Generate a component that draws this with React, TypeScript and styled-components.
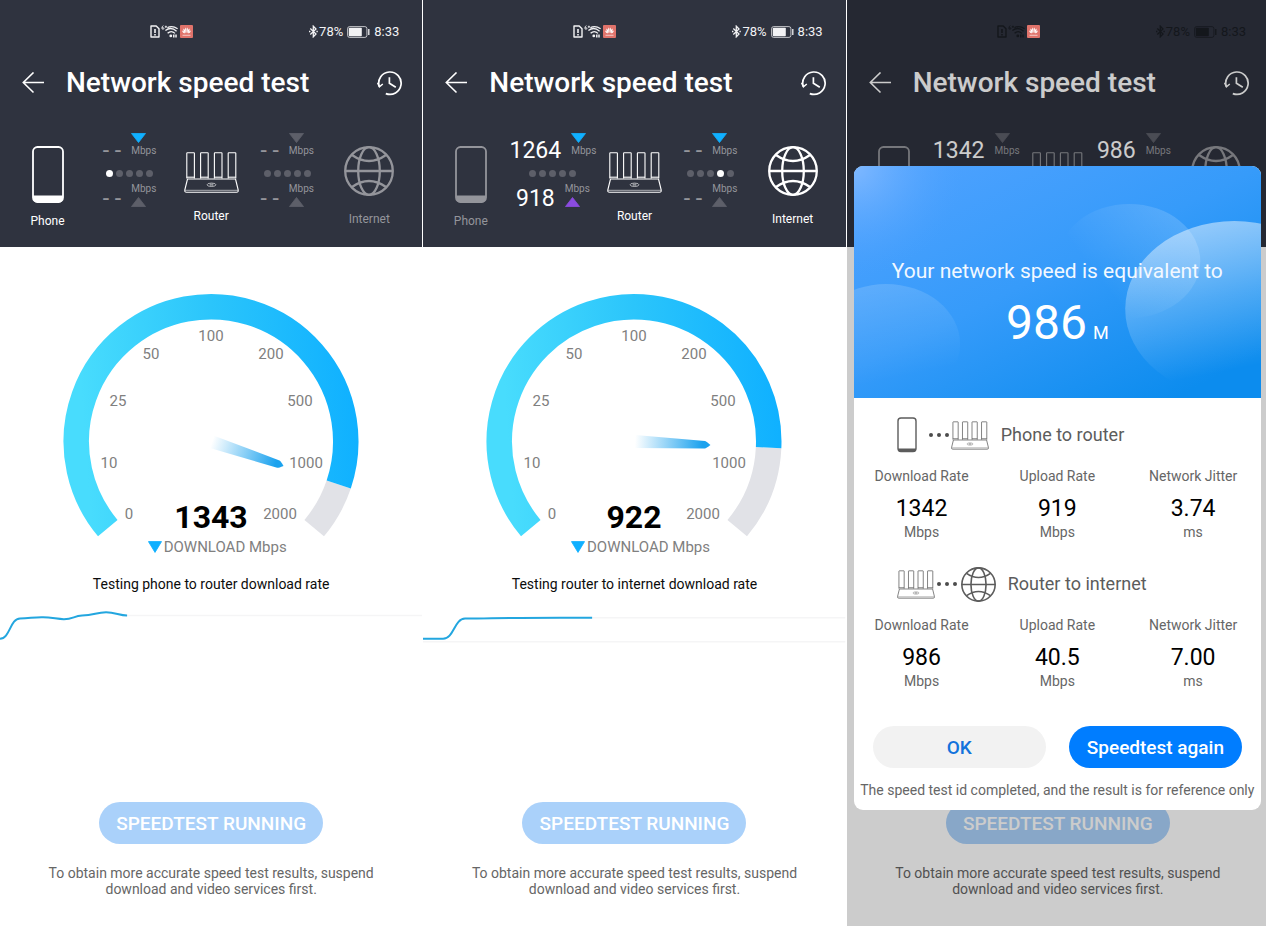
import React from "react";
import styled, { createGlobalStyle } from "styled-components";

const GlobalStyle = createGlobalStyle`
  *, *::before, *::after { box-sizing: border-box; }
  body {
    margin: 0;
    background: #fff;
    font-family: Roboto, "Liberation Sans", sans-serif;
    overflow-x: hidden;
  }
  h1, h2, p { margin: 0; font-weight: 400; }
  button { font-family: inherit; border: 0; cursor: pointer; }
  svg { display: block; flex: none; }
`;

/* ---------- page ---------- */

const Screens = styled.main`
  display: grid;
  grid-template-columns: repeat(3, minmax(0, 1fr));
  gap: 1px;
  width: calc(100% + 3px);
  min-height: 100vh;
`;

const Screen = styled.section`
  position: relative;
  display: flex;
  flex-direction: column;
  background: #fff;
  overflow: hidden;
`;

const Header = styled.header`
  padding-top: 17px;
  background: #2f333f;
  color: #fff;
`;

const StatusBar = styled.div<{ $dark?: boolean }>`
  position: relative;
  z-index: 2;
  display: flex;
  align-items: center;
  justify-content: space-between;
  height: 29px;
  padding: 0 23px 0 150px;
  font-size: 13px;
  color: ${(p) => (p.$dark ? "#14171c" : "#f2f2f4")};
`;

const StatusGroup = styled.div<{ $gap: number }>`
  display: flex;
  align-items: center;
  gap: ${(p) => p.$gap}px;
`;

const TitleRow = styled.div`
  display: flex;
  align-items: center;
  height: 74px;
  padding: 0 20px 0 22px;
`;

const Title = styled.h1`
  flex: 1;
  margin-left: 21px;
  font-size: 28px;
  line-height: 34px;
  font-weight: 500;
  white-space: nowrap;
`;

const IconButton = styled.button`
  display: flex;
  padding: 0;
  background: none;
  color: #fff;
`;

const Devices = styled.div`
  display: grid;
  grid-template-columns:
    minmax(0, 95fr) minmax(0, 69fr) minmax(0, 94fr) minmax(0, 58fr)
    minmax(0, 106fr);
  align-items: start;
  height: 127px;
  padding-top: 13px;
`;

const Device = styled.div<{ $active: boolean; $top: number; $gap: number }>`
  display: flex;
  flex-direction: column;
  align-items: center;
  gap: ${(p) => p.$gap}px;
  padding-top: ${(p) => p.$top}px;
  font-size: 12px;
  line-height: 14px;
  color: ${(p) => (p.$active ? "#fff" : "#94959b")};
`;

const Link = styled.div`
  display: flex;
  flex-direction: column;
  align-items: center;
`;

const Rate = styled.div`
  display: flex;
  align-items: flex-end;
  gap: 10px;
`;

const RateValue = styled.span<{ $empty: boolean }>`
  font-size: 23px;
  line-height: 16px;
  white-space: nowrap;
  color: ${(p) => (p.$empty ? "#94959b" : "#fff")};
`;

const RateUnit = styled.span`
  display: flex;
  flex-direction: column;
  font-size: 10px;
  line-height: 16px;
  color: #94959b;
`;

const Dots = styled.div`
  display: flex;
  gap: 3px;
  margin: 11px 0 4px;
`;

const Dot = styled.i<{ $on: boolean }>`
  width: 7px;
  height: 7px;
  border-radius: 50%;
  background: ${(p) => (p.$on ? "#fff" : "#5d5f69")};
`;

/* ---------- test body ---------- */

const Body = styled.div`
  display: flex;
  flex-direction: column;
  align-items: center;
  padding-top: 44px;
`;

const GaugeSvg = styled.svg`
  width: 300px;
  height: 248px;
`;

const Tick = styled.text`
  font-size: 15px;
  fill: #808080;
  text-anchor: middle;
`;

const Speed = styled.text`
  font-size: 32px;
  font-weight: 700;
  fill: #000;
  text-anchor: middle;
`;

const Direction = styled.p`
  display: flex;
  align-items: center;
  gap: 2px;
  padding-left: 12px;
  font-size: 15px;
  line-height: 16px;
  color: #808080;
`;

const Stage = styled.p`
  margin-top: 20px;
  font-size: 14px;
  line-height: 18px;
  color: #0c0c0c;
`;

const Trace = styled.svg`
  width: 100%;
  height: 48px;
  margin-top: 8px;
`;

const Footer = styled.footer`
  display: flex;
  flex-direction: column;
  align-items: center;
  gap: 21px;
  margin-top: auto;
  padding: 0 40px 29px;
`;

const RunButton = styled.button`
  height: 42px;
  width: 224px;
  padding: 0;
  border-radius: 21px;
  background: #aad1fa;
  color: #fff;
  font-size: 19px;
  font-weight: 500;
  white-space: nowrap;
`;

const Hint = styled.p`
  max-width: 340px;
  font-size: 14px;
  line-height: 16px;
  text-align: center;
  color: #666;
`;

/* ---------- result dialog ---------- */

const Shade = styled.div`
  position: absolute;
  inset: 0;
  z-index: 1;
  background: rgba(0, 0, 0, 0.2);
`;

const Dialog = styled.div`
  position: absolute;
  z-index: 3;
  top: 166px;
  left: 7px;
  right: 8px;
  overflow: hidden;
  border-radius: 9px;
  background: #fff;
`;

const Hero = styled.div`
  position: relative;
  display: flex;
  flex-direction: column;
  align-items: center;
  height: 232px;
  padding-top: 92px;
  color: #fff;
`;

const HeroArt = styled.svg`
  position: absolute;
  inset: 0;
  width: 100%;
  height: 100%;
`;

const HeroText = styled.h2`
  position: relative;
  font-size: 21px;
  line-height: 26px;
  white-space: nowrap;
  color: #f2f8ff;
`;

const HeroSpeed = styled.p`
  position: relative;
  display: flex;
  align-items: baseline;
  gap: 6px;
  margin-top: 10px;
  font-size: 48px;
  line-height: 58px;
`;

const HeroUnit = styled.span`
  font-size: 18px;
`;

const Result = styled.section`
  height: 149px;
`;

const ResultHead = styled.div`
  display: flex;
  align-items: center;
  height: 66px;
  padding: 8px 0 0 43px;
  color: #5c5c5c;
`;

const ResultTitle = styled.h2`
  margin-left: 12px;
  font-size: 18px;
  line-height: 22px;
  color: #5c5c5c;
`;

const SmallDots = styled.span<{ $before: number; $after: number }>`
  display: flex;
  gap: 4px;
  margin: 0 ${(p) => p.$after}px 0 ${(p) => p.$before}px;

  i {
    width: 4px;
    height: 4px;
    border-radius: 50%;
    background: #4c4c4c;
  }
`;

const Stats = styled.table`
  width: 100%;
  table-layout: fixed;
  border-collapse: collapse;
  text-align: center;

  th, td {
    padding: 0;
  }

  th {
    font-size: 14px;
    line-height: 24px;
    font-weight: 400;
    color: #666;
  }
`;

const StatValue = styled.span`
  display: block;
  padding-top: 7px;
  font-size: 23px;
  line-height: 28px;
  color: #000;
`;

const StatUnit = styled.span`
  display: block;
  font-size: 14px;
  line-height: 18px;
  color: #666;
`;

const Actions = styled.div`
  display: grid;
  grid-template-columns: 1fr 1fr;
  gap: 23px;
  padding: 30px 19px 0;
`;

const Action = styled.button<{ $primary?: boolean }>`
  height: 42px;
  padding: 0;
  border-radius: 21px;
  font-size: 19px;
  font-weight: 500;
  white-space: nowrap;
  background: ${(p) => (p.$primary ? "#007dff" : "#f2f2f2")};
  color: ${(p) => (p.$primary ? "#fff" : "#1273dc")};
`;

const Note = styled.p`
  padding: 12px 0 10px;
  font-size: 14px;
  line-height: 20px;
  text-align: center;
  white-space: nowrap;
  color: #666;
`;

/* ---------- drawings ---------- */

const Triangle = ({ color, up, size = 15 }: { color: string; up?: boolean; size?: number }) => (
  <svg width={size} height={size === 15 ? 10 : 12} viewBox="0 0 15 10" preserveAspectRatio="none">
    <path d={up ? "M7.5 0.5 L14.5 9.5 H0.5 Z" : "M0.5 0.5 H14.5 L7.5 9.5 Z"} fill={color} stroke={color} strokeWidth="0.8" strokeLinejoin="round" />
  </svg>
);

const PhoneIcon = ({ small }: { small?: boolean }) =>
  small ? (
    <svg width="20" height="36" viewBox="0 0 20 36" fill="none">
      <rect x="1" y="1" width="18" height="33.5" rx="3" stroke="currentColor" strokeWidth="1.4" />
      <path d="M1 31.5 H19 C19 34 18 35 16 35 H4 C2 35 1 34 1 31.5 Z" fill="currentColor" />
    </svg>
  ) : (
    <svg width="32" height="57" viewBox="0 0 32 57" fill="none">
      <rect x="1" y="1" width="30" height="55" rx="4.5" stroke="currentColor" strokeWidth="1.8" />
      <path d="M1 49.5 H31 V52 C31 55 29 56.5 26.5 56.5 H5.5 C3 56.5 1 55 1 52 Z" fill="currentColor" />
    </svg>
  );

const RouterIcon = ({ width = 55, height = 41 }: { width?: number; height?: number }) => (
  <svg width={width} height={height} viewBox="0 0 55 41" fill="none" stroke="currentColor" strokeWidth="1.1" strokeLinejoin="round">
    {[2.8, 16.6, 30.4, 44.2].map((x) => (
      <g key={x}>
        <path d={`M${x} 26.5 V1.2 Q${x} 0.7 ${x + 0.6} 0.7 H${x + 7} Q${x + 7.6} 0.7 ${x + 7.6} 1.2 V26.5`} />
        <path d={`M${x} 25.2 H${x + 7.6}`} />
      </g>
    ))}
    <path d="M3.5 27 H51.5 L54.2 38 Q54.5 40.3 52.5 40.3 H2.5 Q0.5 40.3 0.8 38 Z" />
    <path d="M1 38.3 H54" strokeWidth="0.6" />
    <ellipse cx="27.5" cy="32.8" rx="4.4" ry="1.7" strokeWidth="0.6" />
    <path d="M25.5 32.8 H29.5 M26.8 31.5 V34 M28.2 31.5 V34" strokeWidth="0.4" />
  </svg>
);

const GlobeIcon = ({ size = 50 }: { size?: number }) => (
  <svg width={size} height={size} viewBox="0 0 50 50" fill="none" stroke="currentColor" strokeWidth="2.3">
    <circle cx="25" cy="25" r="23.8" />
    <ellipse cx="25" cy="25" rx="10.8" ry="23.8" />
    <path d="M1 25 H49 M8 9 Q25 21 42 9 M8 41 Q25 29 42 41" />
  </svg>
);

const BackIcon = () => (
  <svg width="23" height="22" viewBox="0 0 23 22" fill="none" stroke="currentColor" strokeWidth="1.6">
    <path d="M11.5 0.5 L1.3 10.5 L11.5 20.5 M1.3 10.5 H22" />
  </svg>
);

const HistoryIcon = () => (
  <svg width="25" height="25" viewBox="0 0 25 25" fill="none" stroke="currentColor" strokeWidth="1.7">
    <path d="M2.2 15.4 A11.2 11.2 0 1 1 8.8 22.6" />
    <path d="M12.4 6.2 V12.3 L18.8 16.2" />
    <path d="M0.6 11.8 L2.4 15.8 L5.8 13" strokeWidth="1.5" />
  </svg>
);

const SimIcon = () => (
  <svg width="10" height="13" viewBox="0 0 10 13" fill="none" stroke="currentColor" strokeWidth="1.4">
    <path d="M1 1 H6.2 L9 3.8 V12 H1 Z" strokeLinejoin="round" />
    <path d="M5 4 V8 M5 9 V10.4" strokeWidth="1.6" />
  </svg>
);

const WifiIcon = () => (
  <svg width="17" height="13" viewBox="0 0 17 13" fill="none" stroke="currentColor">
    <path d="M2.4 0.6 Q0.8 1.4 0.9 3.1 Q1 4.4 2 4.3 Q3 4.2 2.9 3.2 Q2.8 2.4 1.2 2.8 M3.8 1.8 H6 M4.9 0.7 V2.9" strokeWidth="0.9" />
    <path d="M6.4 2.6 Q11.5 0.2 16.6 3.8 M4.4 5.6 Q10 1.2 15.6 6.2 M6.6 8.3 Q10.2 4.8 14 8.4" strokeWidth="1.3" />
    <circle cx="9.8" cy="10.9" r="1.4" fill="currentColor" stroke="none" />
    <path d="M12.8 9.6 V12.4 M15 9.6 V12.4" strokeWidth="1.5" />
  </svg>
);

const BrandIcon = () => (
  <svg width="13" height="13" viewBox="0 0 13 13">
    <rect width="13" height="13" rx="1" fill="#e0736b" />
    <g fill="#fff">
      <path d="M6.2 8 C4.8 6 4.8 3.5 5.8 2.6 C6.4 3.5 6.5 6 6.2 8 Z" />
      <path d="M6.8 8 C8.2 6 8.2 3.5 7.2 2.6 C6.6 3.5 6.5 6 6.8 8 Z" />
      <path d="M5.8 8 C3.5 6.8 3 5 3.6 3.6 C4.8 4.6 5.5 6 5.8 8 Z" />
      <path d="M7.2 8 C9.5 6.8 10 5 9.4 3.6 C8.2 4.6 7.5 6 7.2 8 Z" />
      <path d="M5.2 8.2 C3 8.4 2.2 7 2.3 5.6 C3.6 6 4.6 7 5.2 8.2 Z" />
      <path d="M7.8 8.2 C10 8.4 10.8 7 10.7 5.6 C9.4 6 8.4 7 7.8 8.2 Z" />
      <rect x="2.5" y="9.8" width="8" height="0.9" opacity="0.7" />
    </g>
  </svg>
);

const BluetoothIcon = () => (
  <svg width="9" height="13" viewBox="0 0 9 13" fill="none" stroke="currentColor" strokeWidth="1.3">
    <path d="M1.3 3.5 L7 9 L4.3 11.8 V1.2 L7 4 L1.3 9.5" />
    <path d="M0 6.5 H1.4 M7.4 6.5 H8.8" />
  </svg>
);

const BatteryIcon = () => (
  <svg width="23" height="12" viewBox="0 0 23 12" fill="none">
    <rect x="0.6" y="0.6" width="19.3" height="10.8" rx="2" stroke="currentColor" strokeWidth="1" opacity="0.75" />
    <rect x="1.8" y="1.8" width="13" height="8.4" rx="0.8" fill="currentColor" />
    <path d="M21.8 3 V9" stroke="currentColor" strokeWidth="1.3" />
  </svg>
);

/* ---------- parts ---------- */

const GREY = "#5d5f69";
const BLUE = "#10b0ff";
const PURPLE = "#8b4be0";

type LinkData = {
  down?: string;
  up?: string;
  active?: number;
  downColor?: string;
  upColor?: string;
};

function LinkRates({ down, up, active = -1, downColor = GREY, upColor = GREY }: LinkData) {
  return (
    <Link>
      <Rate>
        <RateValue $empty={!down}>{down ?? "- -"}</RateValue>
        <RateUnit>
          <Triangle color={downColor} />
          Mbps
        </RateUnit>
      </Rate>
      <Dots>
        {[0, 1, 2, 3, 4].map((i) => (
          <Dot key={i} $on={i === active} />
        ))}
      </Dots>
      <Rate>
        <RateValue $empty={!up}>{up ?? "- -"}</RateValue>
        <RateUnit>
          Mbps
          <Triangle color={upColor} up />
        </RateUnit>
      </Rate>
    </Link>
  );
}

type HeaderProps = {
  darkStatus?: boolean;
  phone: boolean;
  router: boolean;
  internet: boolean;
  local: LinkData;
  wan: LinkData;
};

function ScreenHeader({ darkStatus, phone, router, internet, local, wan }: HeaderProps) {
  return (
    <Header>
      <StatusBar $dark={darkStatus}>
        <StatusGroup $gap={2}>
          <StatusGroup $gap={1}>
            <SimIcon />
            <WifiIcon />
          </StatusGroup>
          <BrandIcon />
        </StatusGroup>
        <StatusGroup $gap={4}>
          <StatusGroup $gap={1}>
            <BluetoothIcon />
            78%
          </StatusGroup>
          <BatteryIcon />
          8:33
        </StatusGroup>
      </StatusBar>
      <TitleRow>
        <IconButton aria-label="Back">
          <BackIcon />
        </IconButton>
        <Title>Network speed test</Title>
        <IconButton aria-label="History">
          <HistoryIcon />
        </IconButton>
      </TitleRow>
      <Devices>
        <Device $active={phone} $top={13} $gap={11}>
          <PhoneIcon />
          Phone
        </Device>
        <LinkRates {...local} />
        <Device $active={router} $top={19} $gap={16}>
          <RouterIcon />
          Router
        </Device>
        <LinkRates {...wan} />
        <Device $active={internet} $top={13} $gap={16}>
          <GlobeIcon />
          Internet
        </Device>
      </Devices>
    </Header>
  );
}

const CX = 150;
const CY = 150.5;
const R = 134.75;

const polar = (deg: number) => {
  const a = (deg * Math.PI) / 180;
  return `${(CX + R * Math.cos(a)).toFixed(2)} ${(CY + R * Math.sin(a)).toFixed(2)}`;
};

const arc = (from: number, to: number) =>
  `M${polar(from)} A${R} ${R} 0 ${to - from > 180 ? 1 : 0} 1 ${polar(to)}`;

const ticks: [string, number, number][] = [
  ["0", 68, 228],
  ["10", 48, 177],
  ["25", 57, 115],
  ["50", 90, 68],
  ["100", 150, 50],
  ["200", 210, 68],
  ["500", 239, 115],
  ["1000", 245, 177],
  ["2000", 219, 228],
];

function Gauge({ id, value, angle }: { id: string; value: string; angle: number }) {
  return (
    <GaugeSvg viewBox="0 0 300 248" role="img" aria-label={`${value} Mbps`}>
      <defs>
        <linearGradient id={`${id}-arc`} gradientUnits="userSpaceOnUse" x1="30" y1="230" x2="300" y2="210">
          <stop offset="0" stopColor="#48dcfd" />
          <stop offset="0.5" stopColor="#2bc5fb" />
          <stop offset="1" stopColor="#10b1ff" />
        </linearGradient>
        <linearGradient id={`${id}-needle`} gradientUnits="userSpaceOnUse" x1="1" y1="0" x2="76" y2="0">
          <stop offset="0" stopColor="#1ba2ee" stopOpacity="0" />
          <stop offset="0.9" stopColor="#1ba2ee" />
        </linearGradient>
      </defs>
      <path d={arc(angle, 40)} fill="none" stroke="#e1e2e7" strokeWidth="25.5" />
      <path d={arc(140, 360 + angle)} fill="none" stroke={`url(#${id}-arc)`} strokeWidth="25.5" />
      <g transform={`translate(${CX} ${CY}) rotate(${angle})`}>
        <path d="M1 -6.5 L71 -3.8 Q72.5 -3.5 76.5 0 Q72.5 3.5 71 3.8 L1 6.5 Z" fill={`url(#${id}-needle)`} />
      </g>
      {ticks.map(([label, x, y]) => (
        <Tick key={label} x={x} y={y}>
          {label}
        </Tick>
      ))}
      <Speed x={CX} y={237}>
        {value}
      </Speed>
    </GaugeSvg>
  );
}

type TestProps = {
  id: string;
  value: string;
  angle: number;
  stage: string;
  trace: string;
  guides: string;
};

function TestBody({ id, value, angle, stage, trace, guides }: TestProps) {
  return (
    <Body>
      <Gauge id={id} value={value} angle={angle} />
      <Direction>
        <Triangle color={BLUE} size={14} />
        DOWNLOAD Mbps
      </Direction>
      <Stage>{stage}</Stage>
      <Trace viewBox="0 0 422 48" preserveAspectRatio="none" fill="none">
        <path d={guides} stroke="#f5f5f6" strokeWidth="1.5" />
        <path d={trace} stroke="#23a6df" strokeWidth="2" />
      </Trace>
    </Body>
  );
}

const ScreenFooter = () => (
  <Footer>
    <RunButton>SPEEDTEST RUNNING</RunButton>
    <Hint>To obtain more accurate speed test results, suspend download and video services first.</Hint>
  </Footer>
);

function StatsTable({ down, up, jitter }: { down: string; up: string; jitter: string }) {
  const cells = [
    [down, "Mbps"],
    [up, "Mbps"],
    [jitter, "ms"],
  ];
  return (
    <Stats>
      <thead>
        <tr>
          <th scope="col">Download Rate</th>
          <th scope="col">Upload Rate</th>
          <th scope="col">Network Jitter</th>
        </tr>
      </thead>
      <tbody>
        <tr>
          {cells.map(([v, unit]) => (
            <td key={v}>
              <StatValue>{v}</StatValue>
              <StatUnit>{unit}</StatUnit>
            </td>
          ))}
        </tr>
      </tbody>
    </Stats>
  );
}

const LinkDots = ({ before, after }: { before: number; after: number }) => (
  <SmallDots $before={before} $after={after}>
    <i />
    <i />
    <i />
  </SmallDots>
);

const HeroBackground = () => (
  <HeroArt viewBox="0 0 407 232" preserveAspectRatio="none" aria-hidden="true">
    <defs>
      <linearGradient id="hero-base" gradientUnits="userSpaceOnUse" x1="90" y1="-30" x2="240" y2="272">
        <stop offset="0" stopColor="#4fa2ff" />
        <stop offset="0.5" stopColor="#369bfa" />
        <stop offset="1" stopColor="#0c8cee" />
      </linearGradient>
      <radialGradient id="hero-glow" gradientUnits="userSpaceOnUse" cx="0" cy="0" r="110">
        <stop offset="0" stopColor="#8fc0ff" stopOpacity="0.75" />
        <stop offset="1" stopColor="#4fa2ff" stopOpacity="0" />
      </radialGradient>
      <linearGradient id="hero-left" x1="0.3" y1="0" x2="0.5" y2="0.8">
        <stop offset="0" stopColor="#fff" stopOpacity="0.16" />
        <stop offset="1" stopColor="#fff" stopOpacity="0" />
      </linearGradient>
      <linearGradient id="hero-mid" x1="0.9" y1="0.2" x2="0.25" y2="0.6">
        <stop offset="0" stopColor="#fff" stopOpacity="0.16" />
        <stop offset="1" stopColor="#fff" stopOpacity="0" />
      </linearGradient>
      <linearGradient id="hero-right" x1="0.4" y1="0" x2="0.6" y2="0.82">
        <stop offset="0" stopColor="#fff" stopOpacity="0.48" />
        <stop offset="0.5" stopColor="#fff" stopOpacity="0.22" />
        <stop offset="1" stopColor="#fff" stopOpacity="0" />
      </linearGradient>
    </defs>
    <rect width="407" height="232" fill="url(#hero-base)" />
    <rect width="407" height="232" fill="url(#hero-glow)" />
    <ellipse cx="32" cy="178" rx="74" ry="60" fill="url(#hero-left)" />
    <ellipse cx="275" cy="95" rx="71" ry="57" fill="url(#hero-mid)" />
    <ellipse cx="380" cy="143" rx="109" ry="88" fill="url(#hero-right)" />
  </HeroArt>
);

function ResultDialog() {
  return (
    <Dialog role="dialog" aria-label="Speed test result">
      <Hero>
        <HeroBackground />
        <HeroText>Your network speed is equivalent to</HeroText>
        <HeroSpeed>
          986 <HeroUnit>M</HeroUnit>
        </HeroSpeed>
      </Hero>
      <Result>
        <ResultHead>
          <PhoneIcon small />
          <LinkDots before={12} after={2} />
          <RouterIcon width={38} height={29} />
          <ResultTitle>Phone to router</ResultTitle>
        </ResultHead>
        <StatsTable down="1342" up="919" jitter="3.74" />
      </Result>
      <Result>
        <ResultHead>
          <RouterIcon width={38} height={29} />
          <LinkDots before={2} after={4} />
          <GlobeIcon size={35} />
          <ResultTitle>Router to internet</ResultTitle>
        </ResultHead>
        <StatsTable down="986" up="40.5" jitter="7.00" />
      </Result>
      <Actions>
        <Action>OK</Action>
        <Action $primary>Speedtest again</Action>
      </Actions>
      <Note>The speed test id completed, and the result is for reference only</Note>
    </Dialog>
  );
}

export default function App() {
  return (
    <>
      <GlobalStyle />
      <Screens>
        <Screen>
          <ScreenHeader
            phone
            router
            internet={false}
            local={{ active: 0, downColor: BLUE }}
            wan={{}}
          />
          <TestBody
            id="local"
            value="1343"
            angle={18.6}
            stage="Testing phone to router download rate"
            trace="M0 37.7 C10 37.7 10 17.6 20 17.4 C30 17.2 34 16 43 16.2 C52 16.4 58 18.3 64 18.2 C73 18 74 15 82 14.6 C94 14.3 96 11.5 106 11.3 C115 11.3 119 14.3 127 14.5"
            guides="M127 14.5 H422"
          />
          <ScreenFooter />
        </Screen>
        <Screen>
          <ScreenHeader
            phone={false}
            router
            internet
            local={{ down: "1264", up: "918", downColor: BLUE, upColor: PURPLE }}
            wan={{ active: 3, downColor: BLUE }}
          />
          <TestBody
            id="wan"
            value="922"
            angle={2.6}
            stage="Testing router to internet download rate"
            trace="M0 37.7 H20 C31 37.7 31 17.8 42 17.6 C80 17.2 90 16.4 169 16.8"
            guides="M169 16.8 H422 M0 40.7 H422"
          />
          <ScreenFooter />
        </Screen>
        <Screen>
          <ScreenHeader
            darkStatus
            phone={false}
            router={false}
            internet={false}
            local={{ down: "1342", up: "919" }}
            wan={{ down: "986", up: "40.5" }}
          />
          <ScreenFooter />
          <Shade />
          <ResultDialog />
        </Screen>
      </Screens>
    </>
  );
}
